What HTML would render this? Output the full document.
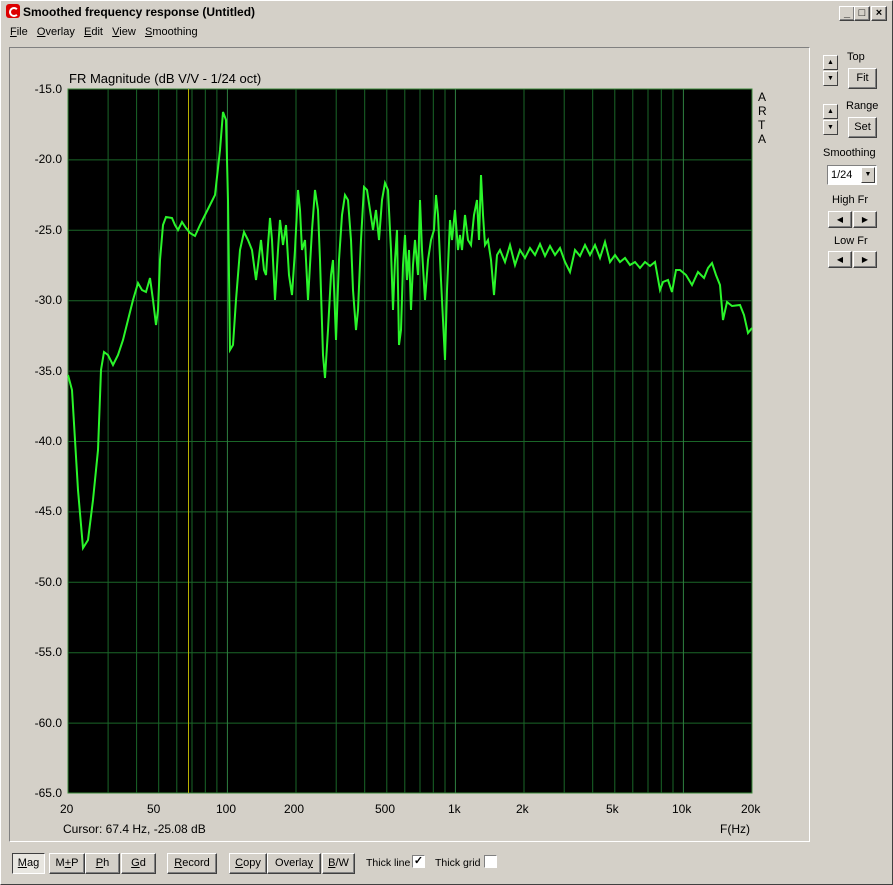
<!DOCTYPE html>
<html><head><style>
body{margin:0;width:893px;height:885px;background:#d4d0c8;font-family:"Liberation Sans",sans-serif;font-size:11px;position:relative;overflow:hidden;color:#000}
.a{position:absolute}
.btn{position:absolute;background:#d4d0c8;border:1px solid;border-color:#fff #404040 #404040 #fff;box-shadow:inset -1px -1px #808080;text-align:center;font-size:11px;line-height:19px;height:19px}
.lab{position:absolute;font-size:12px;color:#000}
.sb{position:absolute;width:13px;height:13px;background:#d4d0c8;border:1px solid;border-color:#fff #404040 #404040 #fff;font-size:7px;line-height:13px;text-align:center}
</style></head><body>
<div class="a" style="left:0;top:0;width:893px;height:885px;border:1px solid;border-color:#fff #404040 #404040 #fff;box-sizing:border-box"></div>
<div class="a" style="left:6px;top:4px;width:14px;height:14px;background:#d00;border-radius:3px"><div class="a" style="left:3px;top:3px;width:6px;height:6px;border:2px solid #fff;border-radius:50%;border-right-color:transparent"></div></div>
<div class="a" style="left:23px;top:5px;font-weight:bold;font-size:12px">Smoothed frequency response (Untitled)</div>
<div class="btn" style="left:839px;top:6px;width:14px;height:13px;line-height:12px;font-weight:bold">_</div>
<div class="btn" style="left:854px;top:6px;width:14px;height:13px;line-height:12px">□</div>
<div class="btn" style="left:871px;top:6px;width:14px;height:13px;line-height:12px;font-weight:bold">×</div>
<div class="a" style="left:10px;top:26px"><u>F</u>ile &nbsp;&nbsp;<u>O</u>verlay &nbsp;&nbsp;<u>E</u>dit &nbsp;&nbsp;<u>V</u>iew &nbsp;&nbsp;<u>S</u>moothing</div>
<div class="a" style="left:9px;top:47px;width:801px;height:795px;border:1px solid;border-color:#808080 #fff #fff #808080;box-sizing:border-box"></div>
<div class="lab" style="left:69px;top:71px;font-size:13px">FR Magnitude (dB V/V - 1/24 oct)</div>
<div class="lab" style="left:758px;top:90px;line-height:14px;font-size:12px">A<br>R<br>T<br>A</div>
<svg class="a" style="left:0;top:0" width="893" height="885">
<rect x="68" y="89" width="684" height="704" fill="#000" stroke="#3a8a3a"/>
<g stroke="#1a6628" stroke-width="1">
<path d="M68 159.9H752M68 230.3H752M68 300.7H752M68 371.1H752M68 441.5H752M68 511.9H752M68 582.3H752M68 652.7H752M68 723.1H752"/>
<path d="M108.1 89V793M136.6 89V793M158.7 89V793M176.8 89V793M192 89V793M205.3 89V793M216.9 89V793M296 89V793M336.2 89V793M364.7 89V793M386.8 89V793M404.8 89V793M420 89V793M433.3 89V793M445 89V793M524 89V793M564.2 89V793M592.7 89V793M614.8 89V793M632.8 89V793M648 89V793M661.3 89V793M673 89V793"/>
</g>
<path d="M227.4 89V793M455.4 89V793M683.4 89V793" stroke="#2f8040"/>
<path d="M188.5 89V793" stroke="#b8b000"/>
<polyline fill="none" stroke="#2af52a" stroke-width="2" points="68,375 72,390 78,490 83,548 88,540 93,500 98,450 101,370 104,352 108,355 113,365 118,355 123,340 128,320 133,300 138,283 142,290 146,292 150,278 153,300 156,325 158,310 160,260 163,225 166,217 172,218 175,225 178,230 182,222 186,228 190,233 195,236 200,225 205,215 210,205 215,195 220,150 223,112 226,120 228,200 230,350 233,345 236,300 240,250 244,232 248,240 252,250 256,280 258,265 261,240 264,270 266,275 268,245 270,218 272,240 275,300 278,250 280,220 283,245 286,225 289,275 292,295 295,250 298,190 300,210 302,250 305,240 308,300 312,230 315,190 318,210 320,260 323,355 325,378 328,330 331,275 333,260 336,340 339,260 342,215 345,195 348,200 351,240 353,290 356,330 358,310 361,240 364,187 367,190 370,210 373,230 376,210 379,240 382,200 385,183 388,190 391,250 393,310 395,260 397,230 399,345 401,330 403,265 405,235 407,280 409,250 411,310 413,265 415,240 418,275 420,200 422,250 425,300 428,260 431,240 434,230 436,195 438,215 441,280 443,320 445,360 447,290 450,220 452,240 455,210 458,250 460,235 462,250 465,215 468,240 471,245 474,215 477,200 479,240 481,175 483,215 485,245 488,240 491,260 494,295 497,255 500,250 505,262 510,245 515,265 520,250 525,258 530,248 535,255 540,244 545,256 550,246 555,255 560,248 565,262 570,272 575,250 580,256 585,245 590,255 595,245 600,258 605,242 610,262 615,255 620,262 625,258 630,265 635,262 640,268 645,262 650,266 655,262 660,290 663,282 668,280 672,292 676,270 680,270 686,275 692,285 698,272 704,278 708,268 712,263 716,275 720,285 723,320 727,302 732,306 740,305 744,315 748,333 752,328"/>
</svg>
<div class="lab" style="left:28px;top:82px;width:34px;text-align:right">-15.0</div>
<div class="lab" style="left:28px;top:152px;width:34px;text-align:right">-20.0</div>
<div class="lab" style="left:28px;top:223px;width:34px;text-align:right">-25.0</div>
<div class="lab" style="left:28px;top:293px;width:34px;text-align:right">-30.0</div>
<div class="lab" style="left:28px;top:364px;width:34px;text-align:right">-35.0</div>
<div class="lab" style="left:28px;top:434px;width:34px;text-align:right">-40.0</div>
<div class="lab" style="left:28px;top:504px;width:34px;text-align:right">-45.0</div>
<div class="lab" style="left:28px;top:575px;width:34px;text-align:right">-50.0</div>
<div class="lab" style="left:28px;top:645px;width:34px;text-align:right">-55.0</div>
<div class="lab" style="left:28px;top:716px;width:34px;text-align:right">-60.0</div>
<div class="lab" style="left:28px;top:786px;width:34px;text-align:right">-65.0</div>
<div class="lab" style="left:60px;top:802px">20</div>
<div class="lab" style="left:147px;top:802px">50</div>
<div class="lab" style="left:216px;top:802px">100</div>
<div class="lab" style="left:284px;top:802px">200</div>
<div class="lab" style="left:375px;top:802px">500</div>
<div class="lab" style="left:448px;top:802px">1k</div>
<div class="lab" style="left:516px;top:802px">2k</div>
<div class="lab" style="left:606px;top:802px">5k</div>
<div class="lab" style="left:672px;top:802px">10k</div>
<div class="lab" style="left:741px;top:802px">20k</div>
<div class="lab" style="left:63px;top:822px">Cursor: 67.4 Hz, -25.08 dB</div>
<div class="lab" style="left:720px;top:822px">F(Hz)</div>
<div class="sb" style="left:823px;top:55px">▲</div><div class="sb" style="left:823px;top:71px">▼</div>
<div class="a" style="left:847px;top:51px">Top</div>
<div class="btn" style="left:848px;top:68px;width:27px">Fit</div>
<div class="sb" style="left:823px;top:104px">▲</div><div class="sb" style="left:823px;top:120px">▼</div>
<div class="a" style="left:846px;top:100px">Range</div>
<div class="btn" style="left:848px;top:117px;width:27px">Set</div>
<div class="a" style="left:823px;top:147px">Smoothing</div>
<div class="a" style="left:827px;top:165px;width:48px;height:18px;background:#fff;border:1px solid;border-color:#808080 #fff #fff #808080"><span style="position:absolute;left:3px;top:3px">1/24</span><div class="sb" style="left:33px;top:1px;width:12px;height:14px">▼</div></div>
<div class="a" style="left:832px;top:194px">High Fr</div>
<div class="btn" style="left:828px;top:211px;width:22px;height:15px;line-height:15px;font-size:8px">◀</div>
<div class="btn" style="left:853px;top:211px;width:22px;height:15px;line-height:15px;font-size:8px">▶</div>
<div class="a" style="left:834px;top:235px">Low Fr</div>
<div class="btn" style="left:828px;top:251px;width:22px;height:15px;line-height:15px;font-size:8px">◀</div>
<div class="btn" style="left:853px;top:251px;width:22px;height:15px;line-height:15px;font-size:8px">▶</div>
<div class="btn" style="left:12px;top:853px;width:31px;background:#e8e6e0;border-color:#404040 #fff #fff #404040;box-shadow:none"><u>M</u>ag</div>
<div class="btn" style="left:49px;top:853px;width:34px">M<u>+</u>P</div>
<div class="btn" style="left:85px;top:853px;width:33px"><u>P</u>h</div>
<div class="btn" style="left:121px;top:853px;width:33px"><u>G</u>d</div>
<div class="btn" style="left:167px;top:853px;width:48px"><u>R</u>ecord</div>
<div class="btn" style="left:229px;top:853px;width:36px"><u>C</u>opy</div>
<div class="btn" style="left:267px;top:853px;width:52px">Overla<u>y</u></div>
<div class="btn" style="left:322px;top:853px;width:31px"><u>B</u>/W</div>
<div class="a" style="left:366px;top:857px;font-size:10.5px">Thick line</div>
<div class="a" style="left:412px;top:855px;width:11px;height:11px;background:#fff;border:1px solid;border-color:#808080 #fff #fff #808080;font-size:11px;line-height:11px;text-align:center;font-weight:bold">✓</div>
<div class="a" style="left:435px;top:857px;font-size:10.5px">Thick grid</div>
<div class="a" style="left:484px;top:855px;width:11px;height:11px;background:#fff;border:1px solid;border-color:#808080 #fff #fff #808080"></div>
</body></html>
